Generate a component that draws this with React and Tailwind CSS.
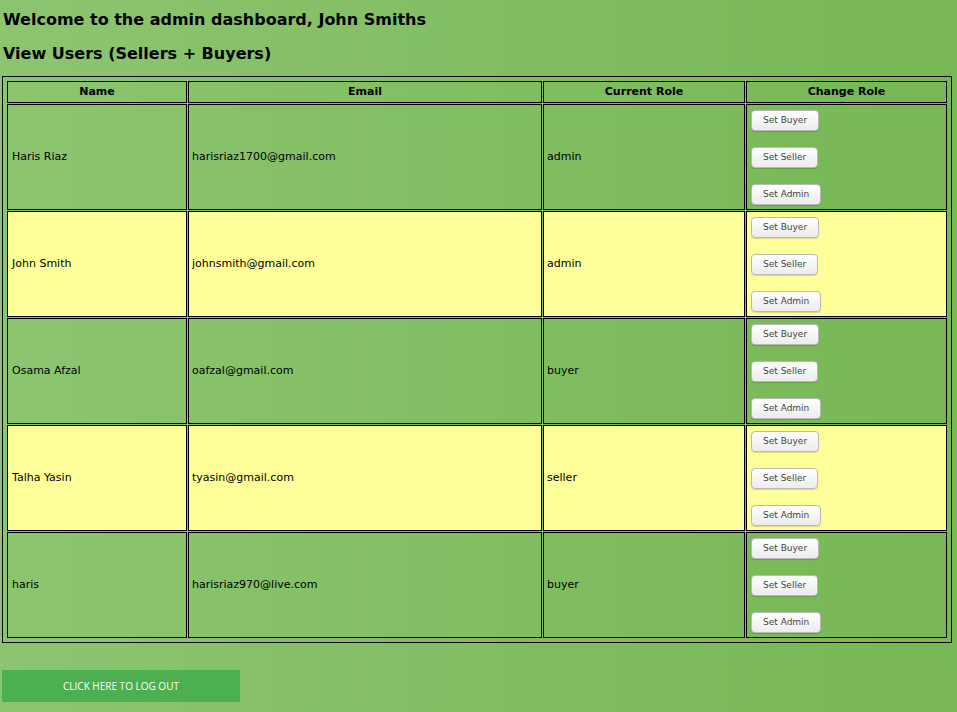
const users = [
  { name: "Haris Riaz", email: "harisriaz1700@gmail.com", role: "admin" },
  { name: "John Smith", email: "johnsmith@gmail.com", role: "admin" },
  { name: "Osama Afzal", email: "oafzal@gmail.com", role: "buyer" },
  { name: "Talha Yasin", email: "tyasin@gmail.com", role: "seller" },
  { name: "haris", email: "harisriaz970@live.com", role: "buyer" },
];

const RoleButton = ({ label }) => (
  <button className="h-[21px] px-[11px] rounded-[4px] border border-[#b9b9b9] bg-gradient-to-b from-white to-[#ececec] shadow-[0_1px_1px_rgba(0,0,0,0.15)] text-[9px] text-[#444] leading-none">
    {label}
  </button>
);

export default function App() {
  return (
    <div className="min-h-screen w-full bg-gradient-to-r from-[#8cc570] to-[#77b754] font-['DejaVu_Sans',sans-serif] text-black px-[2px] pt-[10px] pb-4">
      <h1 className="text-[16px] font-bold leading-[20px] pl-px">
        Welcome to the admin dashboard, John Smiths
      </h1>
      <h2 className="text-[16px] font-bold leading-[20px] mt-[14px] pl-px">
        View Users (Sellers + Buyers)
      </h2>
      <table className="mt-[12px] w-[950px] border border-black border-separate border-spacing-px p-[3px] text-[11px]">
        <thead>
          <tr>
            <th className="w-[180px] h-[22px] border border-black font-bold text-[11px]">Name</th>
            <th className="w-[354px] border border-black font-bold text-[11px]">Email</th>
            <th className="w-[202px] border border-black font-bold text-[11px]">Current Role</th>
            <th className="border border-black font-bold text-[11px]">Change Role</th>
          </tr>
        </thead>
        <tbody>
          {users.map((u, i) => {
            const bg = i % 2 === 1 ? "bg-[#ffff99]" : "";
            return (
              <tr key={u.email}>
                <td className={`border border-black px-[4px] ${bg}`}>{u.name}</td>
                <td className={`border border-black px-[3px] ${bg}`}>{u.email}</td>
                <td className={`border border-black px-[3px] ${bg}`}>{u.role}</td>
                <td className={`border border-black pl-[4px] pt-[5px] pb-[4px] ${bg}`}>
                  <div className="flex flex-col items-start gap-4">
                    <RoleButton label="Set Buyer" />
                    <RoleButton label="Set Seller" />
                    <RoleButton label="Set Admin" />
                  </div>
                </td>
              </tr>
            );
          })}
        </tbody>
      </table>
      <button className="mt-[27px] w-[238px] h-[32px] bg-[#4caf50] text-white text-[10px] font-['Open_Sans',sans-serif] uppercase">
        Click here to log out
      </button>
    </div>
  );
}
